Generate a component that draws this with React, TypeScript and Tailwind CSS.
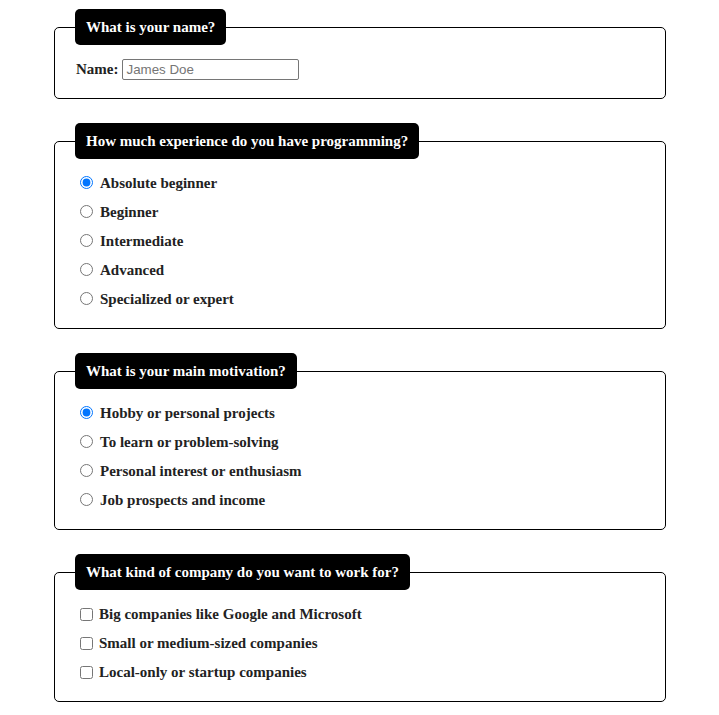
import React from "react";

const serif = { fontFamily: '"Liberation Serif", "Times New Roman", serif' };

function Legend({ children }: { children: React.ReactNode }) {
  return (
    <legend className="bg-black text-white font-bold text-[15px] leading-[36px] h-[36px] px-[11px] rounded-[5px]">
      {children}
    </legend>
  );
}

function Option({ type, name, label, checked }: { type: "radio" | "checkbox"; name: string; label: string; checked?: boolean }) {
  return (
    <label className="flex items-center h-[29px] font-bold text-[15px] text-[#222]">
      <input
        type={type}
        name={name}
        defaultChecked={checked}
        className={
          type === "radio"
            ? "ml-[5px] mr-[7px] w-[13px] h-[13px] m-0 -translate-y-px"
            : "ml-[5px] mr-[6px] w-[13px] h-[13px] m-0"
        }
      />
      <span>{label}</span>
    </label>
  );
}

export default function App() {
  return (
    <div className="bg-white min-h-[715px] pt-[9px]" style={serif}>
      <div className="ml-[54px] w-[612px] flex flex-col gap-[24px]">
        <fieldset className="border border-black rounded-[5px] pl-[20px] pr-[20px] pt-[10px] pb-[14px]">
          <Legend>What is your name?</Legend>
          <div className="flex items-center h-[29px] text-[15px] font-bold text-[#222]">
            <span className="pl-[1px]">Name:</span>
            <input
              type="text"
              placeholder="James Doe"
              className="ml-[4px] w-[177px] h-[21px] border border-[#767676] rounded-[2px] px-[3px] text-[13.33px] font-normal text-black placeholder:text-[#757575]"
              style={{ fontFamily: '"Liberation Sans", Arial, sans-serif' }}
            />
          </div>
        </fieldset>

        <fieldset className="border border-black rounded-[5px] pl-[20px] pr-[20px] pt-[10px] pb-[14px]">
          <Legend>How much experience do you have programming?</Legend>
          <Option type="radio" name="exp" label="Absolute beginner" checked />
          <Option type="radio" name="exp" label="Beginner" />
          <Option type="radio" name="exp" label="Intermediate" />
          <Option type="radio" name="exp" label="Advanced" />
          <Option type="radio" name="exp" label="Specialized or expert" />
        </fieldset>

        <fieldset className="border border-black rounded-[5px] pl-[20px] pr-[20px] pt-[10px] pb-[14px]">
          <Legend>What is your main motivation?</Legend>
          <Option type="radio" name="mot" label="Hobby or personal projects" checked />
          <Option type="radio" name="mot" label="To learn or problem-solving" />
          <Option type="radio" name="mot" label="Personal interest or enthusiasm" />
          <Option type="radio" name="mot" label="Job prospects and income" />
        </fieldset>

        <fieldset className="border border-black rounded-[5px] pl-[20px] pr-[20px] pt-[10px] pb-[14px]">
          <Legend>What kind of company do you want to work for?</Legend>
          <Option type="checkbox" name="co" label="Big companies like Google and Microsoft" />
          <Option type="checkbox" name="co" label="Small or medium-sized companies" />
          <Option type="checkbox" name="co" label="Local-only or startup companies" />
        </fieldset>
      </div>
    </div>
  );
}
